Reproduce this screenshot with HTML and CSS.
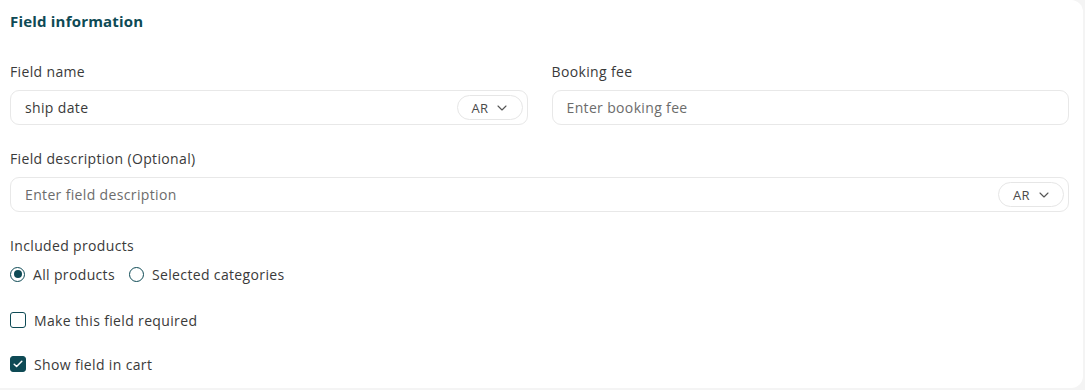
FILE: index.html
```html
<!DOCTYPE html>
<html lang="en">
<head>
    <meta charset="UTF-8">
    <meta name="viewport" content="width=device-width, initial-scale=1.0">
    <title>Field information</title>
    <link rel="stylesheet" href="styles.css">
</head>
<body>

    <div class="card">
        <h2 class="card-title">Field information</h2>

        <div class="row">
            <div class="field">
                <label class="field-label">Field name</label>
                <div class="input-box">
                    <span class="input-value">ship date</span>
                    <button class="lang-pill">AR
                        <svg width="10" height="6" viewBox="0 0 10 6"><path d="M1 1l4 4 4-4" fill="none" stroke="#555" stroke-width="1.1" stroke-linecap="round" stroke-linejoin="round"/></svg>
                    </button>
                </div>
            </div>
            <div class="field">
                <label class="field-label">Booking fee</label>
                <div class="input-box">
                    <span class="input-placeholder">Enter booking fee</span>
                </div>
            </div>
        </div>

        <div class="field field-full">
            <label class="field-label">Field description (Optional)</label>
            <div class="input-box">
                <span class="input-placeholder">Enter field description</span>
                <button class="lang-pill">AR
                    <svg width="10" height="6" viewBox="0 0 10 6"><path d="M1 1l4 4 4-4" fill="none" stroke="#555" stroke-width="1.1" stroke-linecap="round" stroke-linejoin="round"/></svg>
                </button>
            </div>
        </div>

        <div class="field-full">
            <div class="field-label">Included products</div>
            <div class="radio-row">
                <label class="option"><span class="radio radio-on"></span>All products</label>
                <label class="option"><span class="radio"></span>Selected categories</label>
            </div>
        </div>

        <label class="option check-row"><span class="checkbox"></span>Make this field required</label>

        <label class="option check-row check-row-last">
            <span class="checkbox checkbox-on">
                <svg width="10" height="8" viewBox="0 0 10 8"><path d="M1.2 4.2l2.4 2.3L8.8 1.3" fill="none" stroke="#fff" stroke-width="1.5" stroke-linecap="round" stroke-linejoin="round"/></svg>
            </span>Show field in cart
        </label>
    </div>

</body>
</html>
```

FILE: styles.css
```css
body {
    margin: 0;
    background-color: #f4f4f4;
    font-family: "Open Sans", Arial, sans-serif;
    font-size: 14px;
    letter-spacing: 0.35px;
    color: #3a3a3a;
}
.card {
    width: 1059px;
    height: 376px;
    padding: 12px 14px 0 10px;
    background-color: #ffffff;
    border-radius: 0 12px 12px 0;
}
.card-title {
    margin: 0;
    font-size: 15px;
    line-height: 18px;
    font-weight: 700;
    letter-spacing: 0.2px;
    color: #0e4a55;
}
.row {
    display: flex;
    gap: 24px;
    margin-top: 33px;
}
.field {
    flex: 1;
}
.field-full {
    margin-top: 25px;
}
.field-label {
    display: block;
    line-height: 18px;
    margin-bottom: 9px;
}
.input-box {
    height: 33px;
    border: 1px solid #e8e8e8;
    border-radius: 9px;
    display: flex;
    align-items: center;
    justify-content: space-between;
    padding: 0 4px 0 14px;
}
.input-placeholder {
    color: #6c6c6c;
}
.lang-pill {
    display: flex;
    align-items: center;
    gap: 9px;
    width: 66px;
    height: 25px;
    padding: 0 0 0 14px;
    border: 1px solid #e6e6e6;
    border-radius: 13px;
    background: #ffffff;
    font-family: inherit;
    font-size: 13px;
    letter-spacing: 0.3px;
    color: #4a4a4a;
}
.radio-row {
    display: flex;
    gap: 14px;
}
.option {
    display: flex;
    align-items: center;
    gap: 8px;
    height: 20px;
}
.radio {
    width: 13px;
    height: 13px;
    border: 1.5px solid #0e4a55;
    border-radius: 50%;
    display: flex;
    align-items: center;
    justify-content: center;
}
.radio-on::after {
    content: "";
    width: 8px;
    height: 8px;
    border-radius: 50%;
    background-color: #0e4a55;
}
.check-row {
    margin-top: 26px;
}
.check-row-last {
    margin-top: 24px;
}
.checkbox {
    width: 14px;
    height: 14px;
    border: 1.5px solid #0e4a55;
    border-radius: 3px;
    display: flex;
    align-items: center;
    justify-content: center;
}
.checkbox-on {
    background-color: #0e4a55;
}
```
